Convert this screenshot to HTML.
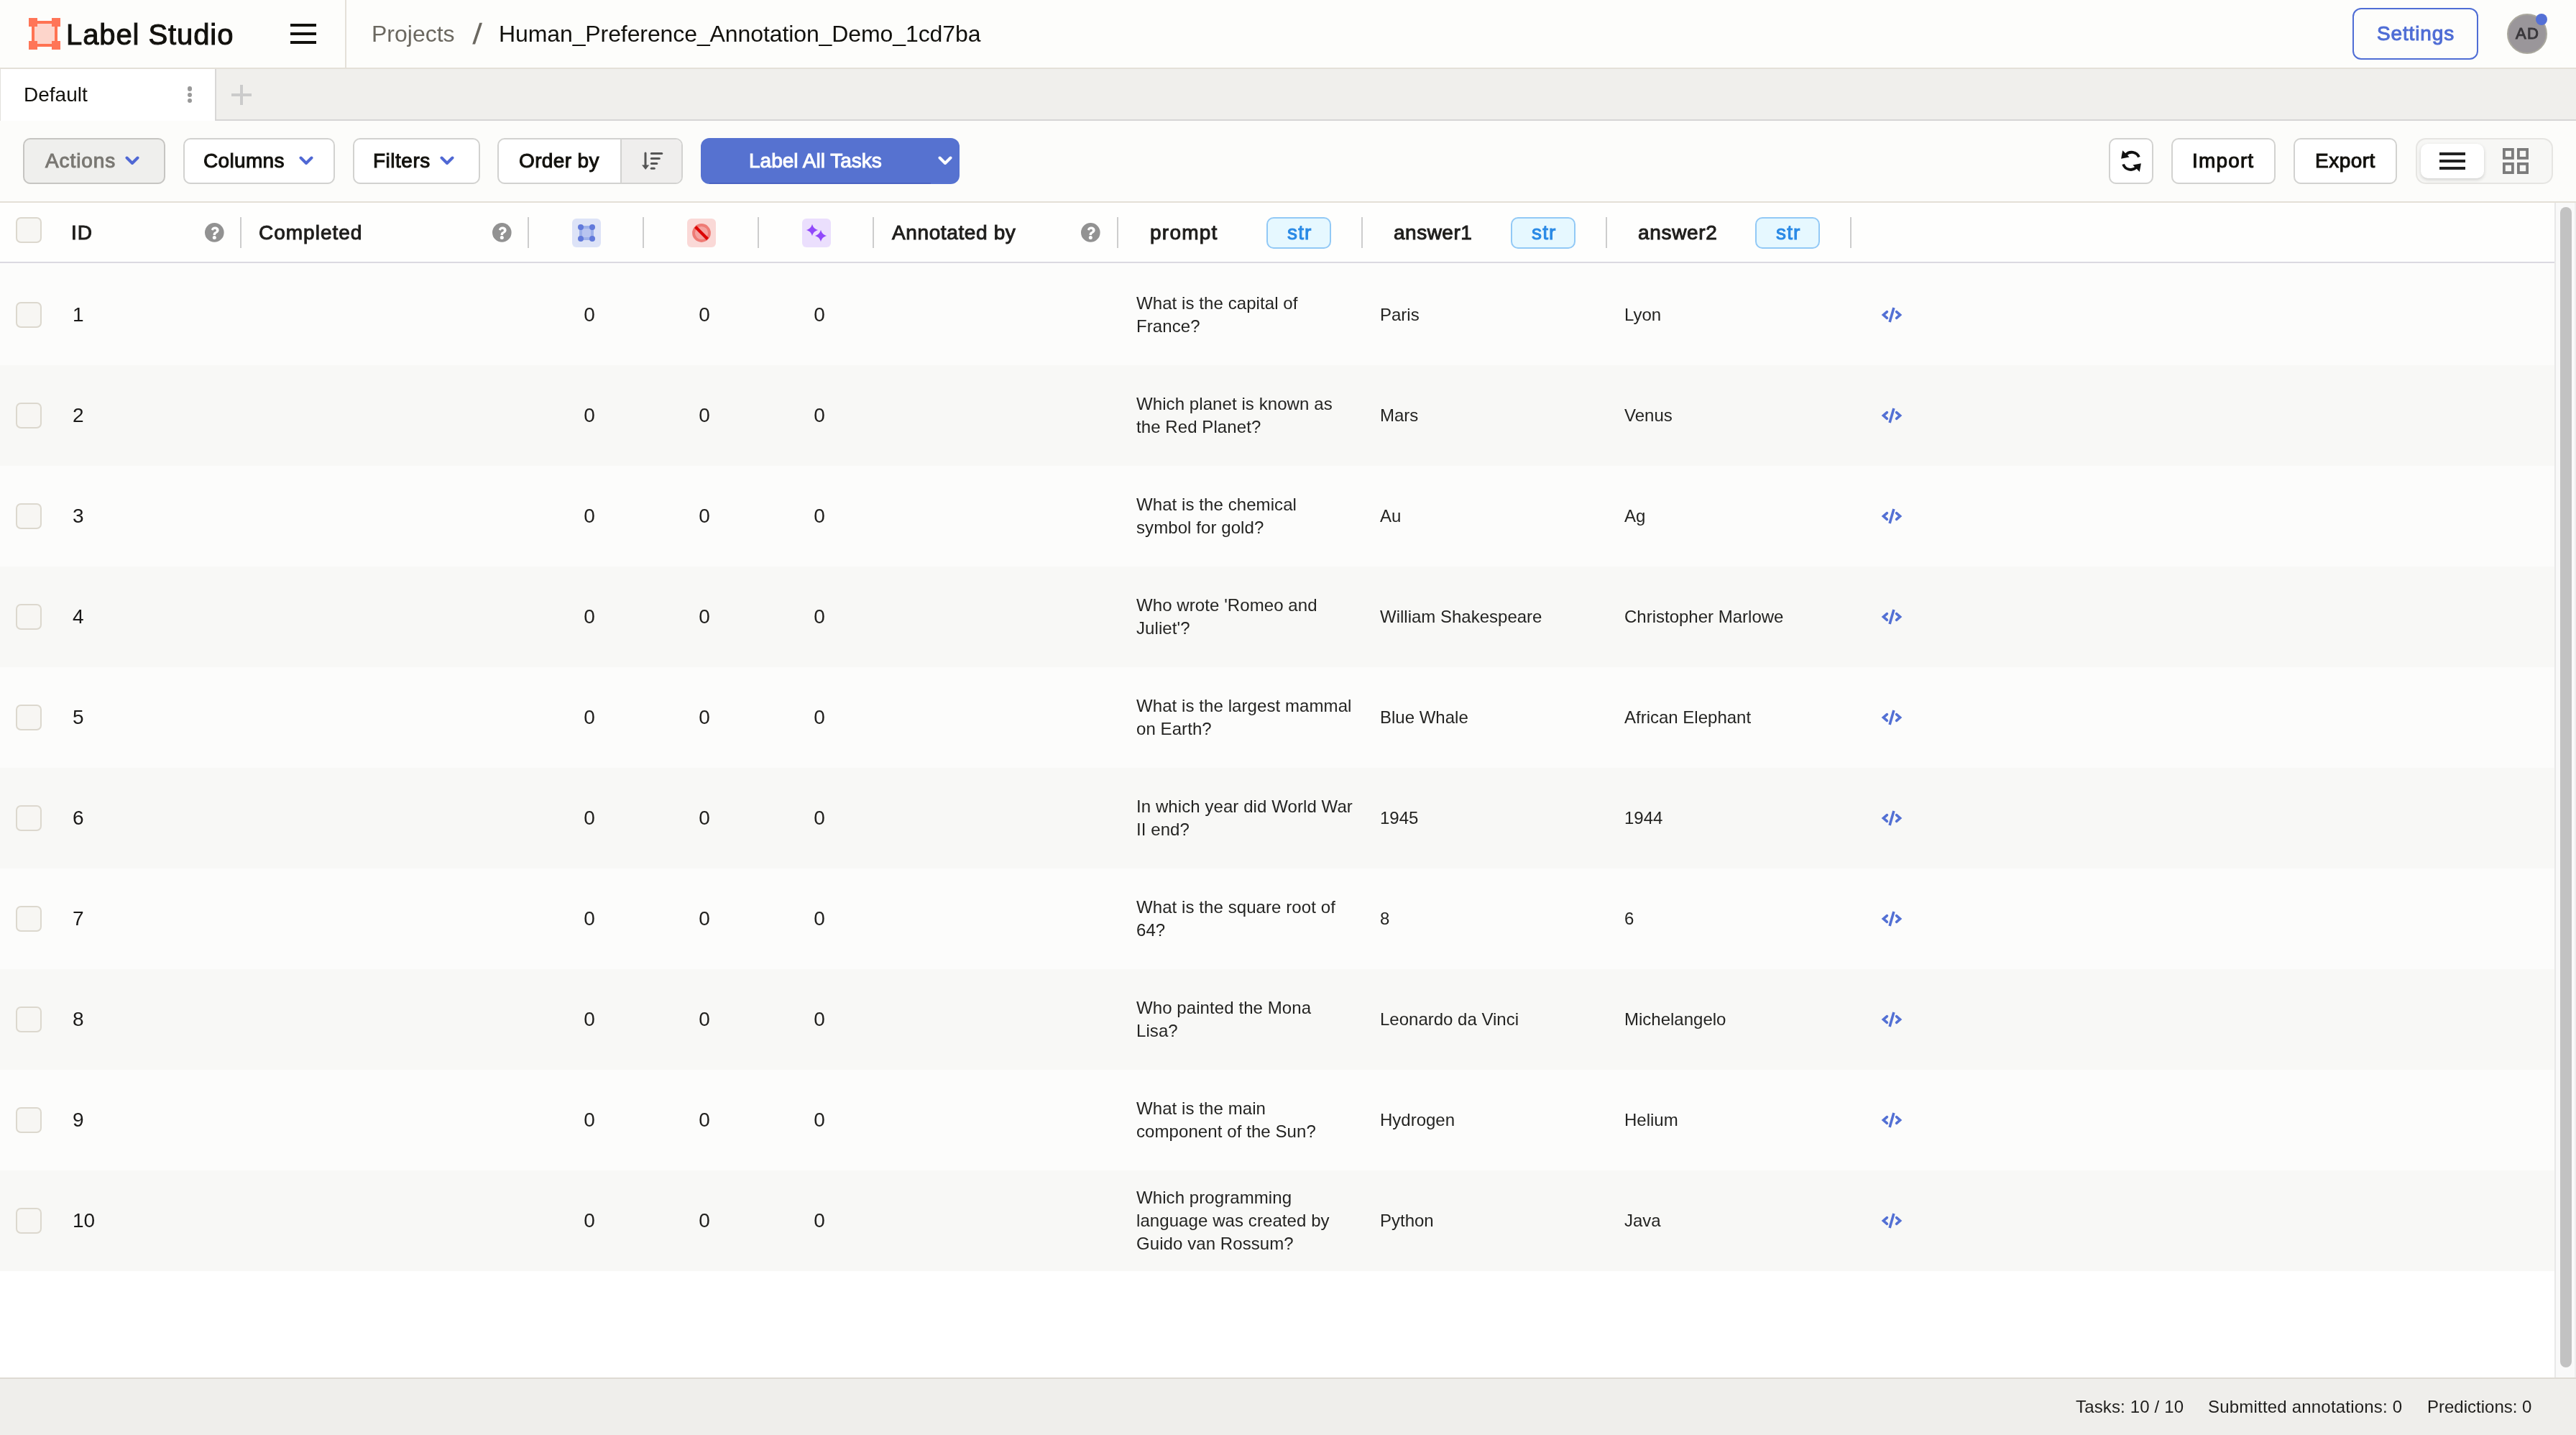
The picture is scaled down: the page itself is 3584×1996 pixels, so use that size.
<!DOCTYPE html>
<html><head><meta charset="utf-8"><title>Label Studio</title>
<style>
html,body{margin:0;padding:0;width:3584px;height:1996px;overflow:hidden;background:#ffffff;}
body{position:relative;font-family:"Liberation Sans", sans-serif;}
.a{position:absolute;}
.t{position:absolute;white-space:nowrap;font-family:"Liberation Sans", sans-serif;will-change:transform;}
@media (max-width:2600px){html{zoom:0.5;}}
</style></head><body>
<div class="a" style="left:0px;top:0px;width:3584px;height:94px;background:#fdfdfb;"></div>
<div class="a" style="left:0px;top:94px;width:3584px;height:2px;background:#e4e0d8;"></div>
<svg class="a" style="left:40px;top:25px" width="44" height="44" viewBox="0 0 44 44"><rect x="8" y="8" width="28" height="28" fill="#fdd5cb"/><rect x="12" y="4" width="20" height="4" fill="#ff7352"/><rect x="12" y="36" width="20" height="4" fill="#ff7352"/><rect x="4" y="12" width="4" height="20" fill="#ff7352"/><rect x="36" y="12" width="4" height="20" fill="#ff7352"/><rect x="0" y="0" width="12" height="12" fill="#ff7557"/><rect x="32" y="0" width="12" height="12" fill="#ff7557"/><rect x="0" y="32" width="12" height="12" fill="#ff7557"/><rect x="32" y="32" width="12" height="12" fill="#ff7557"/></svg>
<div class="t" style="left:92px;top:28.14px;font-size:40px;line-height:40px;font-weight:400;color:#12110d;letter-spacing:0.909px;-webkit-text-stroke:1px #12110d;">Label Studio</div>
<div class="a" style="left:404px;top:33px;width:36px;height:4px;background:#12110d;"></div>
<div class="a" style="left:404px;top:45px;width:36px;height:4px;background:#12110d;"></div>
<div class="a" style="left:404px;top:57px;width:36px;height:4px;background:#12110d;"></div>
<div class="a" style="left:480px;top:0px;width:2px;height:94px;background:#e4e0d8;"></div>
<div class="t" style="left:517px;top:30.91px;font-size:32px;line-height:32px;font-weight:400;color:#6b6860;letter-spacing:0px;">Projects</div>
<svg class="a" style="left:655px;top:30px" width="20" height="36" viewBox="0 0 20 36"><polygon points="12.2,1.7 16,1.7 6,31.6 2.2,31.6" fill="#6b6860"/></svg>
<div class="t" style="left:694px;top:30.91px;font-size:32px;line-height:32px;font-weight:400;color:#12110d;letter-spacing:-0.1px;">Human_Preference_Annotation_Demo_1cd7ba</div>
<div class="a" style="left:3273px;top:11px;width:175px;height:72px;box-sizing:border-box;border:2px solid #4f6dd5;border-radius:12px;"></div>
<div class="t" style="left:3307px;top:33.30px;font-size:28px;line-height:28px;font-weight:400;color:#4f6dd5;letter-spacing:0.857px;-webkit-text-stroke:1px #4f6dd5;">Settings</div>
<div class="a" style="left:3488px;top:19px;width:56px;height:56px;box-sizing:border-box;border-radius:50%;background:#9a969a;border:2px solid #aaa89e;"></div>
<div class="t" style="left:3499.5px;top:36.38px;font-size:22px;line-height:22px;font-weight:400;color:#39373b;letter-spacing:1.3px;-webkit-text-stroke:1px #39373b;">AD</div>
<div class="a" style="left:3528px;top:19px;width:16px;height:16px;border-radius:50%;background:#5470d6;"></div>
<div class="a" style="left:0px;top:96px;width:3584px;height:70px;background:#f0efec;"></div>
<div class="a" style="left:0px;top:166px;width:3584px;height:2px;background:#d6d5d5;"></div>
<div class="a" style="left:0px;top:96px;width:299px;height:72px;background:#ffffff;"></div>
<div class="a" style="left:0px;top:96px;width:1px;height:72px;background:#e2e0dc;"></div>
<div class="a" style="left:299px;top:96px;width:2px;height:70px;background:#d8d7d6;"></div>
<div class="t" style="left:33px;top:118.30px;font-size:28px;line-height:28px;font-weight:400;color:#12110d;letter-spacing:0px;">Default</div>
<div class="a" style="left:260.8px;top:120.4px;width:6.4px;height:6.4px;border-radius:50%;background:#999"></div>
<div class="a" style="left:260.8px;top:128.7px;width:6.4px;height:6.4px;border-radius:50%;background:#999"></div>
<div class="a" style="left:260.8px;top:137.0px;width:6.4px;height:6.4px;border-radius:50%;background:#999"></div>
<div class="a" style="left:322px;top:130px;width:28px;height:4px;background:#cbcbcb;"></div>
<div class="a" style="left:334px;top:118px;width:4px;height:28px;background:#cbcbcb;"></div>
<div class="a" style="left:0px;top:168px;width:3584px;height:112px;background:#fcfcfa;"></div>
<div class="a" style="left:0px;top:280px;width:3584px;height:2px;background:#e4e0d7;"></div>
<div class="a" style="left:32px;top:192px;width:198px;height:64px;box-sizing:border-box;background:#efefed;border:2px solid #c6c5c2;border-radius:10px;"></div>
<div class="t" style="left:62.5px;top:210.30px;font-size:28px;line-height:28px;font-weight:400;color:#7a7873;letter-spacing:0.917px;-webkit-text-stroke:1px #7a7873;">Actions</div>
<svg class="a" style="left:174px;top:216.5px" width="20" height="14.7" viewBox="0 0 20 14.7"><path d="M2.5 2.5 L10 10 L17.5 2.5" fill="none" stroke="#5068d4" stroke-width="4" stroke-linecap="round" stroke-linejoin="round"/></svg>
<div class="a" style="left:255px;top:192px;width:211px;height:64px;box-sizing:border-box;background:#ffffff;border:2px solid #d2d2d0;border-radius:10px;"></div>
<div class="t" style="left:283px;top:210.30px;font-size:28px;line-height:28px;font-weight:400;color:#12110d;letter-spacing:0.333px;-webkit-text-stroke:1px #12110d;">Columns</div>
<svg class="a" style="left:416px;top:216.5px" width="20" height="14.7" viewBox="0 0 20 14.7"><path d="M2.5 2.5 L10 10 L17.5 2.5" fill="none" stroke="#5068d4" stroke-width="4" stroke-linecap="round" stroke-linejoin="round"/></svg>
<div class="a" style="left:491px;top:192px;width:177px;height:64px;box-sizing:border-box;background:#ffffff;border:2px solid #d2d2d0;border-radius:10px;"></div>
<div class="t" style="left:519px;top:210.30px;font-size:28px;line-height:28px;font-weight:400;color:#12110d;letter-spacing:0.5px;-webkit-text-stroke:1px #12110d;">Filters</div>
<svg class="a" style="left:612px;top:216.5px" width="20" height="14.7" viewBox="0 0 20 14.7"><path d="M2.5 2.5 L10 10 L17.5 2.5" fill="none" stroke="#5068d4" stroke-width="4" stroke-linecap="round" stroke-linejoin="round"/></svg>
<div class="a" style="left:692px;top:192px;width:258px;height:64px;box-sizing:border-box;background:#ffffff;border:2px solid #d2d2d0;border-radius:10px;overflow:hidden;"></div>
<div class="a" style="left:864px;top:194px;width:84px;height:60px;background:#efeeed;border-radius:0 8px 8px 0;"></div>
<div class="a" style="left:863px;top:194px;width:2px;height:60px;background:#d2d2d0;"></div>
<div class="t" style="left:721.8px;top:210.30px;font-size:28px;line-height:28px;font-weight:400;color:#12110d;letter-spacing:0.371px;-webkit-text-stroke:1px #12110d;">Order by</div>
<svg class="a" style="left:890px;top:210px" width="34" height="28" viewBox="0 0 34 28"><line x1="8" y1="3" x2="8" y2="21" stroke="#555" stroke-width="3" stroke-linecap="round"/><path d="M3 19.5 L13.3 19.5 L8.15 26 Z" fill="#555"/><line x1="16.3" y1="3.4" x2="30.8" y2="3.4" stroke="#555" stroke-width="3" stroke-linecap="round"/><line x1="16.3" y1="10.4" x2="27.3" y2="10.4" stroke="#555" stroke-width="3" stroke-linecap="round"/><line x1="16.3" y1="17.4" x2="23.8" y2="17.4" stroke="#555" stroke-width="3" stroke-linecap="round"/><line x1="16.3" y1="24.3" x2="20.3" y2="24.3" stroke="#555" stroke-width="3" stroke-linecap="round"/></svg>
<div class="a" style="left:975px;top:192px;width:360px;height:64px;background:#5672d0;border-radius:12px;"></div>
<div class="a" style="left:987px;top:254px;width:308px;height:2px;background:#4a63c2;"></div>
<div class="t" style="left:1042px;top:210.30px;font-size:28px;line-height:28px;font-weight:400;color:#ffffff;letter-spacing:0px;-webkit-text-stroke:1px #ffffff;">Label All Tasks</div>
<svg class="a" style="left:1305px;top:216.5px" width="20" height="14.7" viewBox="0 0 20 14.7"><path d="M2.5 2.5 L10 10 L17.5 2.5" fill="none" stroke="#ffffff" stroke-width="4" stroke-linecap="round" stroke-linejoin="round"/></svg>
<div class="a" style="left:2934px;top:192px;width:62px;height:64px;box-sizing:border-box;background:#ffffff;border:2px solid #d2d2d0;border-radius:10px;"></div>
<svg class="a" style="left:2948px;top:207px" width="34" height="34" viewBox="0 0 34 34"><path d="M27.9 11.5 A11 11 0 0 0 9.5 8.5" fill="none" stroke="#111" stroke-width="3.8"/><path d="M5.2 2.2 L3.1 13.7 L14.6 11.6 Z" fill="#111"/><path d="M6.1 21.5 A11 11 0 0 0 24.5 25.5" fill="none" stroke="#111" stroke-width="3.8"/><path d="M28.8 32 L30.9 20.3 L19.4 22.4 Z" fill="#111"/></svg>
<div class="a" style="left:3021px;top:192px;width:145px;height:64px;box-sizing:border-box;background:#ffffff;border:2px solid #d2d2d0;border-radius:10px;"></div>
<div class="t" style="left:3050px;top:210.30px;font-size:28px;line-height:28px;font-weight:400;color:#12110d;letter-spacing:1.16px;-webkit-text-stroke:1px #12110d;">Import</div>
<div class="a" style="left:3191px;top:192px;width:144px;height:64px;box-sizing:border-box;background:#ffffff;border:2px solid #d2d2d0;border-radius:10px;"></div>
<div class="t" style="left:3220.6px;top:210.30px;font-size:28px;line-height:28px;font-weight:400;color:#12110d;letter-spacing:0.48px;-webkit-text-stroke:1px #12110d;">Export</div>
<div class="a" style="left:3361px;top:192px;width:191px;height:64px;box-sizing:border-box;background:#f7f7f5;border:2px solid #e6e5e2;border-radius:14px;"></div>
<div class="a" style="left:3368px;top:200px;width:88px;height:48px;background:#ffffff;border-radius:10px;box-shadow:0 2px 5px rgba(0,0,0,0.16);"></div>
<div class="a" style="left:3394px;top:212px;width:36px;height:4px;background:#222"></div>
<div class="a" style="left:3394px;top:222px;width:36px;height:4px;background:#222"></div>
<div class="a" style="left:3394px;top:232px;width:36px;height:4px;background:#222"></div>
<svg class="a" style="left:3482px;top:206px" width="36" height="36" viewBox="0 0 36 36"><rect x="1.9" y="1.9" width="12" height="12" fill="none" stroke="#7b7b7b" stroke-width="3.8"/><rect x="21.9" y="1.9" width="12.2" height="12" fill="none" stroke="#7b7b7b" stroke-width="3.8"/><rect x="1.9" y="21.9" width="12" height="12.2" fill="none" stroke="#7b7b7b" stroke-width="3.8"/><rect x="21.9" y="21.9" width="12.2" height="12.2" fill="none" stroke="#7b7b7b" stroke-width="3.8"/></svg>
<div class="a" style="left:0px;top:282px;width:3554px;height:82px;background:#fefefd;"></div>
<div class="a" style="left:0px;top:364px;width:3554px;height:2px;background:#dbd9e1;"></div>
<div class="a" style="left:22px;top:302px;width:36px;height:36px;box-sizing:border-box;background:#f7f6f3;border:2px solid #dcd8ce;border-radius:7px;"></div>
<div class="t" style="left:99px;top:310.30px;font-size:28px;line-height:28px;font-weight:400;color:#1f1e1c;letter-spacing:1.0px;-webkit-text-stroke:1px #1f1e1c;">ID</div>
<svg class="a" style="left:285px;top:310px" width="27" height="27" viewBox="0 0 27 27"><circle cx="13.3" cy="13.4" r="13.3" fill="#929292"/><path d="M8.9 9.6 C9.6 6.9 11.5 5.6 14.0 5.6 C17.3 5.6 19.6 7.6 19.6 10.3 C19.6 12.7 17.8 13.8 16.2 14.8 C15.3 15.4 14.9 16.0 14.9 17.0 L11.6 17.0 C11.5 14.9 12.3 13.6 14.0 12.6 C15.3 11.8 15.9 11.3 15.9 10.4 C15.9 9.3 15.1 8.7 13.9 8.7 C12.7 8.7 11.9 9.5 11.6 10.7 Z" fill="#fff"/><circle cx="13.3" cy="20.6" r="2.5" fill="#fff"/></svg>
<div class="a" style="left:334px;top:302px;width:2px;height:43px;background:#cdcdcd;"></div>
<div class="t" style="left:359.6px;top:310.30px;font-size:28px;line-height:28px;font-weight:400;color:#1f1e1c;letter-spacing:1.0px;-webkit-text-stroke:1px #1f1e1c;">Completed</div>
<svg class="a" style="left:685px;top:310px" width="27" height="27" viewBox="0 0 27 27"><circle cx="13.3" cy="13.4" r="13.3" fill="#929292"/><path d="M8.9 9.6 C9.6 6.9 11.5 5.6 14.0 5.6 C17.3 5.6 19.6 7.6 19.6 10.3 C19.6 12.7 17.8 13.8 16.2 14.8 C15.3 15.4 14.9 16.0 14.9 17.0 L11.6 17.0 C11.5 14.9 12.3 13.6 14.0 12.6 C15.3 11.8 15.9 11.3 15.9 10.4 C15.9 9.3 15.1 8.7 13.9 8.7 C12.7 8.7 11.9 9.5 11.6 10.7 Z" fill="#fff"/><circle cx="13.3" cy="20.6" r="2.5" fill="#fff"/></svg>
<div class="a" style="left:734px;top:302px;width:2px;height:43px;background:#cdcdcd;"></div>
<svg class="a" style="left:796px;top:304px" width="40" height="40" viewBox="0 0 40 40"><rect width="40" height="40" rx="6" fill="#dde3f7"/><rect x="12" y="12" width="16" height="16" fill="#b8c4f0"/><rect x="12" y="10" width="16" height="4" fill="#9db0ea"/><rect x="12" y="26" width="16" height="4" fill="#9db0ea"/><rect x="10" y="12" width="4" height="16" fill="#9db0ea"/><rect x="26" y="12" width="4" height="16" fill="#9db0ea"/><circle cx="12" cy="12" r="4" fill="#627adb"/><circle cx="28" cy="12" r="4" fill="#627adb"/><circle cx="12" cy="28" r="4" fill="#627adb"/><circle cx="28" cy="28" r="4" fill="#627adb"/></svg>
<div class="a" style="left:894px;top:302px;width:2px;height:43px;background:#cdcdcd;"></div>
<svg class="a" style="left:956px;top:304px" width="40" height="40" viewBox="0 0 40 40"><rect width="40" height="40" rx="6" fill="#fad9d7"/><circle cx="20" cy="20" r="11" fill="#f4a3a0" stroke="#ee7b75" stroke-width="3.8"/><line x1="11.5" y1="11.5" x2="28.5" y2="28.5" stroke="#dc0505" stroke-width="4.2"/></svg>
<div class="a" style="left:1054px;top:302px;width:2px;height:43px;background:#cdcdcd;"></div>
<svg class="a" style="left:1116px;top:304px" width="40" height="40" viewBox="0 0 40 40"><rect width="40" height="40" rx="6" fill="#ebdffd"/><path d="M14 7.800000000000001 C15.23 12.31 17.69 14.77 22.2 16 C17.69 17.23 15.23 19.69 14 24.2 C12.77 19.69 10.31 17.23 5.800000000000001 16 C10.31 14.77 12.77 12.31 14 7.800000000000001 Z" fill="#9148fb"/><path d="M26 15.8 C27.23 20.31 29.69 22.77 34.2 24 C29.69 25.23 27.23 27.69 26 32.2 C24.77 27.69 22.31 25.23 17.8 24 C22.31 22.77 24.77 20.31 26 15.8 Z" fill="#9148fb"/></svg>
<div class="a" style="left:1214px;top:302px;width:2px;height:43px;background:#cdcdcd;"></div>
<div class="t" style="left:1240.7px;top:310.30px;font-size:28px;line-height:28px;font-weight:400;color:#1f1e1c;letter-spacing:0.618px;-webkit-text-stroke:1px #1f1e1c;">Annotated by</div>
<svg class="a" style="left:1504px;top:310px" width="27" height="27" viewBox="0 0 27 27"><circle cx="13.3" cy="13.4" r="13.3" fill="#929292"/><path d="M8.9 9.6 C9.6 6.9 11.5 5.6 14.0 5.6 C17.3 5.6 19.6 7.6 19.6 10.3 C19.6 12.7 17.8 13.8 16.2 14.8 C15.3 15.4 14.9 16.0 14.9 17.0 L11.6 17.0 C11.5 14.9 12.3 13.6 14.0 12.6 C15.3 11.8 15.9 11.3 15.9 10.4 C15.9 9.3 15.1 8.7 13.9 8.7 C12.7 8.7 11.9 9.5 11.6 10.7 Z" fill="#fff"/><circle cx="13.3" cy="20.6" r="2.5" fill="#fff"/></svg>
<div class="a" style="left:1554px;top:302px;width:2px;height:43px;background:#cdcdcd;"></div>
<div class="t" style="left:1599.8px;top:310.30px;font-size:28px;line-height:28px;font-weight:400;color:#1f1e1c;letter-spacing:1.24px;-webkit-text-stroke:1px #1f1e1c;">prompt</div>
<div class="a" style="left:1762px;top:302px;width:90px;height:44px;box-sizing:border-box;background:#e6f8ff;border:2px solid #92c9f6;border-radius:10px;"></div><div class="t" style="left:1790.7px;top:310.30px;font-size:28px;line-height:28px;font-weight:400;color:#2a8ae6;letter-spacing:1.15px;-webkit-text-stroke:1px #2a8ae6;">str</div>
<div class="a" style="left:1894px;top:302px;width:2px;height:43px;background:#cdcdcd;"></div>
<div class="t" style="left:1939px;top:310.30px;font-size:28px;line-height:28px;font-weight:400;color:#1f1e1c;letter-spacing:0.5px;-webkit-text-stroke:1px #1f1e1c;">answer1</div>
<div class="a" style="left:2102px;top:302px;width:90px;height:44px;box-sizing:border-box;background:#e6f8ff;border:2px solid #92c9f6;border-radius:10px;"></div><div class="t" style="left:2130.7px;top:310.30px;font-size:28px;line-height:28px;font-weight:400;color:#2a8ae6;letter-spacing:1.15px;-webkit-text-stroke:1px #2a8ae6;">str</div>
<div class="a" style="left:2234px;top:302px;width:2px;height:43px;background:#cdcdcd;"></div>
<div class="t" style="left:2279px;top:310.30px;font-size:28px;line-height:28px;font-weight:400;color:#1f1e1c;letter-spacing:0.667px;-webkit-text-stroke:1px #1f1e1c;">answer2</div>
<div class="a" style="left:2442px;top:302px;width:90px;height:44px;box-sizing:border-box;background:#e6f8ff;border:2px solid #92c9f6;border-radius:10px;"></div><div class="t" style="left:2470.7px;top:310.30px;font-size:28px;line-height:28px;font-weight:400;color:#2a8ae6;letter-spacing:1.15px;-webkit-text-stroke:1px #2a8ae6;">str</div>
<div class="a" style="left:2574px;top:302px;width:2px;height:43px;background:#cdcdcd;"></div>
<div class="a" style="left:0px;top:366px;width:3554px;height:2px;background:#fcfcfb;"></div>
<div class="a" style="left:0px;top:368px;width:3554px;height:140px;background:#fcfcfb;"></div>
<div class="a" style="left:22px;top:420px;width:36px;height:36px;box-sizing:border-box;background:#f7f6f3;border:2px solid #dcd8ce;border-radius:7px;"></div>
<div class="t" style="left:100.8px;top:424.30px;font-size:28px;line-height:28px;font-weight:400;color:#1a1918;letter-spacing:0px;">1</div>
<div class="t" style="left:779.5px;width:80px;text-align:center;top:424.30px;font-size:28px;line-height:28px;color:#1f1e1c">0</div>
<div class="t" style="left:940px;width:80px;text-align:center;top:424.30px;font-size:28px;line-height:28px;color:#1f1e1c">0</div>
<div class="t" style="left:1099.5px;width:80px;text-align:center;top:424.30px;font-size:28px;line-height:28px;color:#1f1e1c">0</div>
<div class="t" style="left:1581px;top:406.0px;font-size:24px;line-height:32px;color:#242422;letter-spacing:0.08px">What is the capital of<br>France?</div>
<div class="t" style="left:1920px;top:425.68px;font-size:24px;line-height:24px;font-weight:400;color:#242422;letter-spacing:0px;">Paris</div>
<div class="t" style="left:2260px;top:425.68px;font-size:24px;line-height:24px;font-weight:400;color:#242422;letter-spacing:0px;">Lyon</div>
<svg class="a" style="left:2617px;top:426px" width="30" height="24" viewBox="0 0 30 24"><path d="M8.4 7.6 L3.4 12 L8.4 16.4" fill="none" stroke="#5370d4" stroke-width="3.6" stroke-linecap="round" stroke-linejoin="miter"/><path d="M21.6 7.6 L26.6 12 L21.6 16.4" fill="none" stroke="#5370d4" stroke-width="3.6" stroke-linecap="round" stroke-linejoin="miter"/><line x1="17.9" y1="2" x2="12.1" y2="22" stroke="#5370d4" stroke-width="3.6"/></svg>
<div class="a" style="left:0px;top:508px;width:3554px;height:140px;background:#f8f8f6;"></div>
<div class="a" style="left:22px;top:560px;width:36px;height:36px;box-sizing:border-box;background:#f7f6f3;border:2px solid #dcd8ce;border-radius:7px;"></div>
<div class="t" style="left:100.8px;top:564.30px;font-size:28px;line-height:28px;font-weight:400;color:#1a1918;letter-spacing:0px;">2</div>
<div class="t" style="left:779.5px;width:80px;text-align:center;top:564.30px;font-size:28px;line-height:28px;color:#1f1e1c">0</div>
<div class="t" style="left:940px;width:80px;text-align:center;top:564.30px;font-size:28px;line-height:28px;color:#1f1e1c">0</div>
<div class="t" style="left:1099.5px;width:80px;text-align:center;top:564.30px;font-size:28px;line-height:28px;color:#1f1e1c">0</div>
<div class="t" style="left:1581px;top:546.0px;font-size:24px;line-height:32px;color:#242422;letter-spacing:0.08px">Which planet is known as<br>the Red Planet?</div>
<div class="t" style="left:1920px;top:565.68px;font-size:24px;line-height:24px;font-weight:400;color:#242422;letter-spacing:0px;">Mars</div>
<div class="t" style="left:2260px;top:565.68px;font-size:24px;line-height:24px;font-weight:400;color:#242422;letter-spacing:0px;">Venus</div>
<svg class="a" style="left:2617px;top:566px" width="30" height="24" viewBox="0 0 30 24"><path d="M8.4 7.6 L3.4 12 L8.4 16.4" fill="none" stroke="#5370d4" stroke-width="3.6" stroke-linecap="round" stroke-linejoin="miter"/><path d="M21.6 7.6 L26.6 12 L21.6 16.4" fill="none" stroke="#5370d4" stroke-width="3.6" stroke-linecap="round" stroke-linejoin="miter"/><line x1="17.9" y1="2" x2="12.1" y2="22" stroke="#5370d4" stroke-width="3.6"/></svg>
<div class="a" style="left:0px;top:648px;width:3554px;height:140px;background:#fcfcfb;"></div>
<div class="a" style="left:22px;top:700px;width:36px;height:36px;box-sizing:border-box;background:#f7f6f3;border:2px solid #dcd8ce;border-radius:7px;"></div>
<div class="t" style="left:100.8px;top:704.30px;font-size:28px;line-height:28px;font-weight:400;color:#1a1918;letter-spacing:0px;">3</div>
<div class="t" style="left:779.5px;width:80px;text-align:center;top:704.30px;font-size:28px;line-height:28px;color:#1f1e1c">0</div>
<div class="t" style="left:940px;width:80px;text-align:center;top:704.30px;font-size:28px;line-height:28px;color:#1f1e1c">0</div>
<div class="t" style="left:1099.5px;width:80px;text-align:center;top:704.30px;font-size:28px;line-height:28px;color:#1f1e1c">0</div>
<div class="t" style="left:1581px;top:686.0px;font-size:24px;line-height:32px;color:#242422;letter-spacing:0.08px">What is the chemical<br>symbol for gold?</div>
<div class="t" style="left:1920px;top:705.68px;font-size:24px;line-height:24px;font-weight:400;color:#242422;letter-spacing:0px;">Au</div>
<div class="t" style="left:2260px;top:705.68px;font-size:24px;line-height:24px;font-weight:400;color:#242422;letter-spacing:0px;">Ag</div>
<svg class="a" style="left:2617px;top:706px" width="30" height="24" viewBox="0 0 30 24"><path d="M8.4 7.6 L3.4 12 L8.4 16.4" fill="none" stroke="#5370d4" stroke-width="3.6" stroke-linecap="round" stroke-linejoin="miter"/><path d="M21.6 7.6 L26.6 12 L21.6 16.4" fill="none" stroke="#5370d4" stroke-width="3.6" stroke-linecap="round" stroke-linejoin="miter"/><line x1="17.9" y1="2" x2="12.1" y2="22" stroke="#5370d4" stroke-width="3.6"/></svg>
<div class="a" style="left:0px;top:788px;width:3554px;height:140px;background:#f8f8f6;"></div>
<div class="a" style="left:22px;top:840px;width:36px;height:36px;box-sizing:border-box;background:#f7f6f3;border:2px solid #dcd8ce;border-radius:7px;"></div>
<div class="t" style="left:100.8px;top:844.30px;font-size:28px;line-height:28px;font-weight:400;color:#1a1918;letter-spacing:0px;">4</div>
<div class="t" style="left:779.5px;width:80px;text-align:center;top:844.30px;font-size:28px;line-height:28px;color:#1f1e1c">0</div>
<div class="t" style="left:940px;width:80px;text-align:center;top:844.30px;font-size:28px;line-height:28px;color:#1f1e1c">0</div>
<div class="t" style="left:1099.5px;width:80px;text-align:center;top:844.30px;font-size:28px;line-height:28px;color:#1f1e1c">0</div>
<div class="t" style="left:1581px;top:826.0px;font-size:24px;line-height:32px;color:#242422;letter-spacing:0.08px">Who wrote 'Romeo and<br>Juliet'?</div>
<div class="t" style="left:1920px;top:845.68px;font-size:24px;line-height:24px;font-weight:400;color:#242422;letter-spacing:0px;">William Shakespeare</div>
<div class="t" style="left:2260px;top:845.68px;font-size:24px;line-height:24px;font-weight:400;color:#242422;letter-spacing:0px;">Christopher Marlowe</div>
<svg class="a" style="left:2617px;top:846px" width="30" height="24" viewBox="0 0 30 24"><path d="M8.4 7.6 L3.4 12 L8.4 16.4" fill="none" stroke="#5370d4" stroke-width="3.6" stroke-linecap="round" stroke-linejoin="miter"/><path d="M21.6 7.6 L26.6 12 L21.6 16.4" fill="none" stroke="#5370d4" stroke-width="3.6" stroke-linecap="round" stroke-linejoin="miter"/><line x1="17.9" y1="2" x2="12.1" y2="22" stroke="#5370d4" stroke-width="3.6"/></svg>
<div class="a" style="left:0px;top:928px;width:3554px;height:140px;background:#fcfcfb;"></div>
<div class="a" style="left:22px;top:980px;width:36px;height:36px;box-sizing:border-box;background:#f7f6f3;border:2px solid #dcd8ce;border-radius:7px;"></div>
<div class="t" style="left:100.8px;top:984.30px;font-size:28px;line-height:28px;font-weight:400;color:#1a1918;letter-spacing:0px;">5</div>
<div class="t" style="left:779.5px;width:80px;text-align:center;top:984.30px;font-size:28px;line-height:28px;color:#1f1e1c">0</div>
<div class="t" style="left:940px;width:80px;text-align:center;top:984.30px;font-size:28px;line-height:28px;color:#1f1e1c">0</div>
<div class="t" style="left:1099.5px;width:80px;text-align:center;top:984.30px;font-size:28px;line-height:28px;color:#1f1e1c">0</div>
<div class="t" style="left:1581px;top:966.0px;font-size:24px;line-height:32px;color:#242422;letter-spacing:0.08px">What is the largest mammal<br>on Earth?</div>
<div class="t" style="left:1920px;top:985.68px;font-size:24px;line-height:24px;font-weight:400;color:#242422;letter-spacing:0px;">Blue Whale</div>
<div class="t" style="left:2260px;top:985.68px;font-size:24px;line-height:24px;font-weight:400;color:#242422;letter-spacing:0px;">African Elephant</div>
<svg class="a" style="left:2617px;top:986px" width="30" height="24" viewBox="0 0 30 24"><path d="M8.4 7.6 L3.4 12 L8.4 16.4" fill="none" stroke="#5370d4" stroke-width="3.6" stroke-linecap="round" stroke-linejoin="miter"/><path d="M21.6 7.6 L26.6 12 L21.6 16.4" fill="none" stroke="#5370d4" stroke-width="3.6" stroke-linecap="round" stroke-linejoin="miter"/><line x1="17.9" y1="2" x2="12.1" y2="22" stroke="#5370d4" stroke-width="3.6"/></svg>
<div class="a" style="left:0px;top:1068px;width:3554px;height:140px;background:#f8f8f6;"></div>
<div class="a" style="left:22px;top:1120px;width:36px;height:36px;box-sizing:border-box;background:#f7f6f3;border:2px solid #dcd8ce;border-radius:7px;"></div>
<div class="t" style="left:100.8px;top:1124.30px;font-size:28px;line-height:28px;font-weight:400;color:#1a1918;letter-spacing:0px;">6</div>
<div class="t" style="left:779.5px;width:80px;text-align:center;top:1124.30px;font-size:28px;line-height:28px;color:#1f1e1c">0</div>
<div class="t" style="left:940px;width:80px;text-align:center;top:1124.30px;font-size:28px;line-height:28px;color:#1f1e1c">0</div>
<div class="t" style="left:1099.5px;width:80px;text-align:center;top:1124.30px;font-size:28px;line-height:28px;color:#1f1e1c">0</div>
<div class="t" style="left:1581px;top:1106.0px;font-size:24px;line-height:32px;color:#242422;letter-spacing:0.08px">In which year did World War<br>II end?</div>
<div class="t" style="left:1920px;top:1125.68px;font-size:24px;line-height:24px;font-weight:400;color:#242422;letter-spacing:0px;">1945</div>
<div class="t" style="left:2260px;top:1125.68px;font-size:24px;line-height:24px;font-weight:400;color:#242422;letter-spacing:0px;">1944</div>
<svg class="a" style="left:2617px;top:1126px" width="30" height="24" viewBox="0 0 30 24"><path d="M8.4 7.6 L3.4 12 L8.4 16.4" fill="none" stroke="#5370d4" stroke-width="3.6" stroke-linecap="round" stroke-linejoin="miter"/><path d="M21.6 7.6 L26.6 12 L21.6 16.4" fill="none" stroke="#5370d4" stroke-width="3.6" stroke-linecap="round" stroke-linejoin="miter"/><line x1="17.9" y1="2" x2="12.1" y2="22" stroke="#5370d4" stroke-width="3.6"/></svg>
<div class="a" style="left:0px;top:1208px;width:3554px;height:140px;background:#fcfcfb;"></div>
<div class="a" style="left:22px;top:1260px;width:36px;height:36px;box-sizing:border-box;background:#f7f6f3;border:2px solid #dcd8ce;border-radius:7px;"></div>
<div class="t" style="left:100.8px;top:1264.30px;font-size:28px;line-height:28px;font-weight:400;color:#1a1918;letter-spacing:0px;">7</div>
<div class="t" style="left:779.5px;width:80px;text-align:center;top:1264.30px;font-size:28px;line-height:28px;color:#1f1e1c">0</div>
<div class="t" style="left:940px;width:80px;text-align:center;top:1264.30px;font-size:28px;line-height:28px;color:#1f1e1c">0</div>
<div class="t" style="left:1099.5px;width:80px;text-align:center;top:1264.30px;font-size:28px;line-height:28px;color:#1f1e1c">0</div>
<div class="t" style="left:1581px;top:1246.0px;font-size:24px;line-height:32px;color:#242422;letter-spacing:0.08px">What is the square root of<br>64?</div>
<div class="t" style="left:1920px;top:1265.68px;font-size:24px;line-height:24px;font-weight:400;color:#242422;letter-spacing:0px;">8</div>
<div class="t" style="left:2260px;top:1265.68px;font-size:24px;line-height:24px;font-weight:400;color:#242422;letter-spacing:0px;">6</div>
<svg class="a" style="left:2617px;top:1266px" width="30" height="24" viewBox="0 0 30 24"><path d="M8.4 7.6 L3.4 12 L8.4 16.4" fill="none" stroke="#5370d4" stroke-width="3.6" stroke-linecap="round" stroke-linejoin="miter"/><path d="M21.6 7.6 L26.6 12 L21.6 16.4" fill="none" stroke="#5370d4" stroke-width="3.6" stroke-linecap="round" stroke-linejoin="miter"/><line x1="17.9" y1="2" x2="12.1" y2="22" stroke="#5370d4" stroke-width="3.6"/></svg>
<div class="a" style="left:0px;top:1348px;width:3554px;height:140px;background:#f8f8f6;"></div>
<div class="a" style="left:22px;top:1400px;width:36px;height:36px;box-sizing:border-box;background:#f7f6f3;border:2px solid #dcd8ce;border-radius:7px;"></div>
<div class="t" style="left:100.8px;top:1404.30px;font-size:28px;line-height:28px;font-weight:400;color:#1a1918;letter-spacing:0px;">8</div>
<div class="t" style="left:779.5px;width:80px;text-align:center;top:1404.30px;font-size:28px;line-height:28px;color:#1f1e1c">0</div>
<div class="t" style="left:940px;width:80px;text-align:center;top:1404.30px;font-size:28px;line-height:28px;color:#1f1e1c">0</div>
<div class="t" style="left:1099.5px;width:80px;text-align:center;top:1404.30px;font-size:28px;line-height:28px;color:#1f1e1c">0</div>
<div class="t" style="left:1581px;top:1386.0px;font-size:24px;line-height:32px;color:#242422;letter-spacing:0.08px">Who painted the Mona<br>Lisa?</div>
<div class="t" style="left:1920px;top:1405.68px;font-size:24px;line-height:24px;font-weight:400;color:#242422;letter-spacing:0px;">Leonardo da Vinci</div>
<div class="t" style="left:2260px;top:1405.68px;font-size:24px;line-height:24px;font-weight:400;color:#242422;letter-spacing:0px;">Michelangelo</div>
<svg class="a" style="left:2617px;top:1406px" width="30" height="24" viewBox="0 0 30 24"><path d="M8.4 7.6 L3.4 12 L8.4 16.4" fill="none" stroke="#5370d4" stroke-width="3.6" stroke-linecap="round" stroke-linejoin="miter"/><path d="M21.6 7.6 L26.6 12 L21.6 16.4" fill="none" stroke="#5370d4" stroke-width="3.6" stroke-linecap="round" stroke-linejoin="miter"/><line x1="17.9" y1="2" x2="12.1" y2="22" stroke="#5370d4" stroke-width="3.6"/></svg>
<div class="a" style="left:0px;top:1488px;width:3554px;height:140px;background:#fcfcfb;"></div>
<div class="a" style="left:22px;top:1540px;width:36px;height:36px;box-sizing:border-box;background:#f7f6f3;border:2px solid #dcd8ce;border-radius:7px;"></div>
<div class="t" style="left:100.8px;top:1544.30px;font-size:28px;line-height:28px;font-weight:400;color:#1a1918;letter-spacing:0px;">9</div>
<div class="t" style="left:779.5px;width:80px;text-align:center;top:1544.30px;font-size:28px;line-height:28px;color:#1f1e1c">0</div>
<div class="t" style="left:940px;width:80px;text-align:center;top:1544.30px;font-size:28px;line-height:28px;color:#1f1e1c">0</div>
<div class="t" style="left:1099.5px;width:80px;text-align:center;top:1544.30px;font-size:28px;line-height:28px;color:#1f1e1c">0</div>
<div class="t" style="left:1581px;top:1526.0px;font-size:24px;line-height:32px;color:#242422;letter-spacing:0.08px">What is the main<br>component of the Sun?</div>
<div class="t" style="left:1920px;top:1545.68px;font-size:24px;line-height:24px;font-weight:400;color:#242422;letter-spacing:0px;">Hydrogen</div>
<div class="t" style="left:2260px;top:1545.68px;font-size:24px;line-height:24px;font-weight:400;color:#242422;letter-spacing:0px;">Helium</div>
<svg class="a" style="left:2617px;top:1546px" width="30" height="24" viewBox="0 0 30 24"><path d="M8.4 7.6 L3.4 12 L8.4 16.4" fill="none" stroke="#5370d4" stroke-width="3.6" stroke-linecap="round" stroke-linejoin="miter"/><path d="M21.6 7.6 L26.6 12 L21.6 16.4" fill="none" stroke="#5370d4" stroke-width="3.6" stroke-linecap="round" stroke-linejoin="miter"/><line x1="17.9" y1="2" x2="12.1" y2="22" stroke="#5370d4" stroke-width="3.6"/></svg>
<div class="a" style="left:0px;top:1628px;width:3554px;height:140px;background:#f8f8f6;"></div>
<div class="a" style="left:22px;top:1680px;width:36px;height:36px;box-sizing:border-box;background:#f7f6f3;border:2px solid #dcd8ce;border-radius:7px;"></div>
<div class="t" style="left:100.8px;top:1684.30px;font-size:28px;line-height:28px;font-weight:400;color:#1a1918;letter-spacing:0px;">10</div>
<div class="t" style="left:779.5px;width:80px;text-align:center;top:1684.30px;font-size:28px;line-height:28px;color:#1f1e1c">0</div>
<div class="t" style="left:940px;width:80px;text-align:center;top:1684.30px;font-size:28px;line-height:28px;color:#1f1e1c">0</div>
<div class="t" style="left:1099.5px;width:80px;text-align:center;top:1684.30px;font-size:28px;line-height:28px;color:#1f1e1c">0</div>
<div class="t" style="left:1581px;top:1650.0px;font-size:24px;line-height:32px;color:#242422;letter-spacing:0.08px">Which programming<br>language was created by<br>Guido van Rossum?</div>
<div class="t" style="left:1920px;top:1685.68px;font-size:24px;line-height:24px;font-weight:400;color:#242422;letter-spacing:0px;">Python</div>
<div class="t" style="left:2260px;top:1685.68px;font-size:24px;line-height:24px;font-weight:400;color:#242422;letter-spacing:0px;">Java</div>
<svg class="a" style="left:2617px;top:1686px" width="30" height="24" viewBox="0 0 30 24"><path d="M8.4 7.6 L3.4 12 L8.4 16.4" fill="none" stroke="#5370d4" stroke-width="3.6" stroke-linecap="round" stroke-linejoin="miter"/><path d="M21.6 7.6 L26.6 12 L21.6 16.4" fill="none" stroke="#5370d4" stroke-width="3.6" stroke-linecap="round" stroke-linejoin="miter"/><line x1="17.9" y1="2" x2="12.1" y2="22" stroke="#5370d4" stroke-width="3.6"/></svg>
<div class="a" style="left:0px;top:1768px;width:3554px;height:148px;background:#ffffff;"></div>
<div class="a" style="left:3554px;top:282px;width:30px;height:1634px;background:#f9f9f9;"></div>
<div class="a" style="left:3554px;top:282px;width:2px;height:1634px;background:#e8e8e8;"></div>
<div class="a" style="left:3582px;top:282px;width:2px;height:1634px;background:#efefef;"></div>
<div class="a" style="left:3562px;top:288px;width:16px;height:1614px;background:#c2c2c2;border-radius:8px;"></div>
<div class="a" style="left:0px;top:1916px;width:3584px;height:80px;background:#efeeeb;"></div>
<div class="a" style="left:0px;top:1916px;width:3584px;height:2px;background:#dedad3;"></div>
<div class="t" style="left:2888px;top:1945.18px;font-size:24px;line-height:24px;font-weight:400;color:#1f1e1c;letter-spacing:0.15px;">Tasks: 10 / 10</div>
<div class="t" style="left:3072px;top:1945.18px;font-size:24px;line-height:24px;font-weight:400;color:#1f1e1c;letter-spacing:0.2px;">Submitted annotations: 0</div>
<div class="t" style="left:3377px;top:1945.18px;font-size:24px;line-height:24px;font-weight:400;color:#1f1e1c;letter-spacing:0px;">Predictions: 0</div>
</body></html>
